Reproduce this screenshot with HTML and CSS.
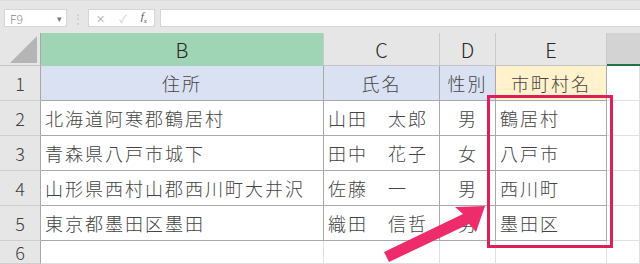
FILE: index.html
```html
<!DOCTYPE html>
<html lang="ja">
<head>
    <meta charset="UTF-8">
    <title>市町村名</title>
    <link rel="stylesheet" href="styles.css">
</head>
<body>
  <div class="wrap">
    <div class="fbar">
        <div class="namebox"><span>F9</span><span class="caret">▾</span></div>
        <div class="grip">⋮</div>
        <div class="btns"><span>✕</span><span>✓</span><span class="fx">f<sub>x</sub></span></div>
        <div class="input"></div>
    </div>

    <div class="sheet">
        <div class="corner"><i></i></div>
        <div class="ch selcol">B</div>
        <div class="ch">C</div>
        <div class="ch">D</div>
        <div class="ch">E</div>
        <div class="ch curcol"></div>

        <div class="rh">1</div>
        <div class="c tb head">住所</div>
        <div class="c tb head">氏名</div>
        <div class="c tb head">性別</div>
        <div class="c tb head yel">市町村名</div>
        <div class="c"></div>

        <div class="rh">2</div>
        <div class="c tb">北海道阿寒郡鶴居村</div>
        <div class="c tb">山田　太郎</div>
        <div class="c tb right">男</div>
        <div class="c tb">鶴居村</div>
        <div class="c"></div>

        <div class="rh">3</div>
        <div class="c tb">青森県八戸市城下</div>
        <div class="c tb">田中　花子</div>
        <div class="c tb right">女</div>
        <div class="c tb">八戸市</div>
        <div class="c"></div>

        <div class="rh">4</div>
        <div class="c tb">山形県西村山郡西川町大井沢</div>
        <div class="c tb">佐藤　一</div>
        <div class="c tb right">男</div>
        <div class="c tb">西川町</div>
        <div class="c"></div>

        <div class="rh">5</div>
        <div class="c tb">東京都墨田区墨田</div>
        <div class="c tb">織田　信哲</div>
        <div class="c tb right">男</div>
        <div class="c tb">墨田区</div>
        <div class="c"></div>

        <div class="rh">6</div>
        <div class="c"></div>
        <div class="c"></div>
        <div class="c"></div>
        <div class="c"></div>
        <div class="c"></div>
    </div>

    <!-- highlight box + arrow drawn over the sheet -->
    <div class="mark"></div>
    <svg class="arrow" width="640" height="264" viewBox="0 0 640 264">
        <polygon points="384,252 463,214 455,207 485,206 476,232 469,224 389,262" fill="#ee2c6c"/>
    </svg>
  </div>
</body>
</html>
```

FILE: styles.css
```css
*{
    box-sizing: border-box;
}
body{
    margin: 0;
    background: #ffffff;
    font-family: "Noto Sans CJK JP", "Noto Sans", sans-serif;
    font-weight: 300;
    color: #454545;
}
.wrap{
    position: relative;
    width: 640px;
    height: 264px;
    overflow: hidden;
}

/* formula bar */
.fbar{
    height: 33px;
    display: flex;
    align-items: flex-start;
    padding: 8px 0 0 4px;
    background: #e6e6e6;
    border-top: 1px solid #dcdcdc;
}
.namebox{
    width: 63px;
    height: 18px;
    background: #fff;
    border: 1px solid #d6d6d6;
    display: flex;
    justify-content: space-between;
    align-items: center;
    padding: 0 4px 0 5px;
    font-size: 12px;
    color: #8a8a8a;
}
.caret{
    font-size: 9px;
    color: #777;
}
.grip{
    width: 21px;
    text-align: center;
    font-size: 12px;
    line-height: 18px;
    color: #c8c8c8;
}
.btns{
    width: 67px;
    height: 18px;
    background: #fff;
    border: 1px solid #d6d6d6;
    display: flex;
    justify-content: space-around;
    align-items: center;
    font-size: 11px;
    color: #bcbcbc;
}
.btns .fx{
    font-family: "Liberation Serif", serif;
    font-style: italic;
    color: #555;
    font-size: 11px;
}
.btns .fx sub{
    font-size: 7px;
}
.input{
    flex: 1;
    height: 18px;
    margin-left: 5px;
    background: #fff;
    border: 1px solid #d6d6d6;
    border-right: none;
}

/* sheet grid */
.sheet{
    display: grid;
    grid-template-columns: 41px 283px 116px 56px 111px 1fr;
    grid-template-rows: 33px repeat(5, 35px) 23px;
}
.corner{
    background: #e6e6e6;
    border-right: 1px solid #a8a8a8;
    border-bottom: 1px solid #c4c4c4;
    padding: 3px 3px 2px 10px;
}
.corner i{
    display: block;
    width: 100%;
    height: 100%;
    background: #b5b5b5;
    clip-path: polygon(100% 0, 100% 100%, 0 100%);
}
.ch{
    background: #e6e6e6;
    border-right: 1px solid #cacaca;
    border-bottom: 1px solid #c4c4c4;
    display: flex;
    align-items: center;
    justify-content: center;
    font-size: 20px;
    color: #262626;
}
.ch.selcol{
    background: #9fd5b4;
    border-bottom-color: #9fd5b4;
}
.ch.curcol{
    background: #d3d3d3;
    border-bottom: 2px solid #217346;
    border-right: none;
}
.rh{
    background: #e6e6e6;
    border-right: 1px solid #a8a8a8;
    border-bottom: 1px solid #cfcfcf;
    display: flex;
    align-items: center;
    justify-content: center;
    font-size: 18px;
    color: #404040;
}
.c{
    border-right: 1px solid #e0e0e0;
    border-bottom: 1px solid #e0e0e0;
    display: flex;
    align-items: center;
    padding: 0 4px;
    font-size: 18px;
    letter-spacing: 2px;
    white-space: nowrap;
}
.c.tb{
    border-right-color: #a9a9a9;
    border-bottom-color: #a9a9a9;
}
.c.head{
    background: #d9e1f2;
    justify-content: center;
}
.c.head.yel{
    background: #fff2cc;
}
.c.right{
    justify-content: flex-end;
    padding-right: 19px;
    letter-spacing: 0;
}

/* overlays */
.mark{
    position: absolute;
    left: 487px;
    top: 95px;
    width: 126px;
    height: 153px;
    border: 3px solid #de2059;
}
.arrow{
    position: absolute;
    left: 0;
    top: 0;
}
```
